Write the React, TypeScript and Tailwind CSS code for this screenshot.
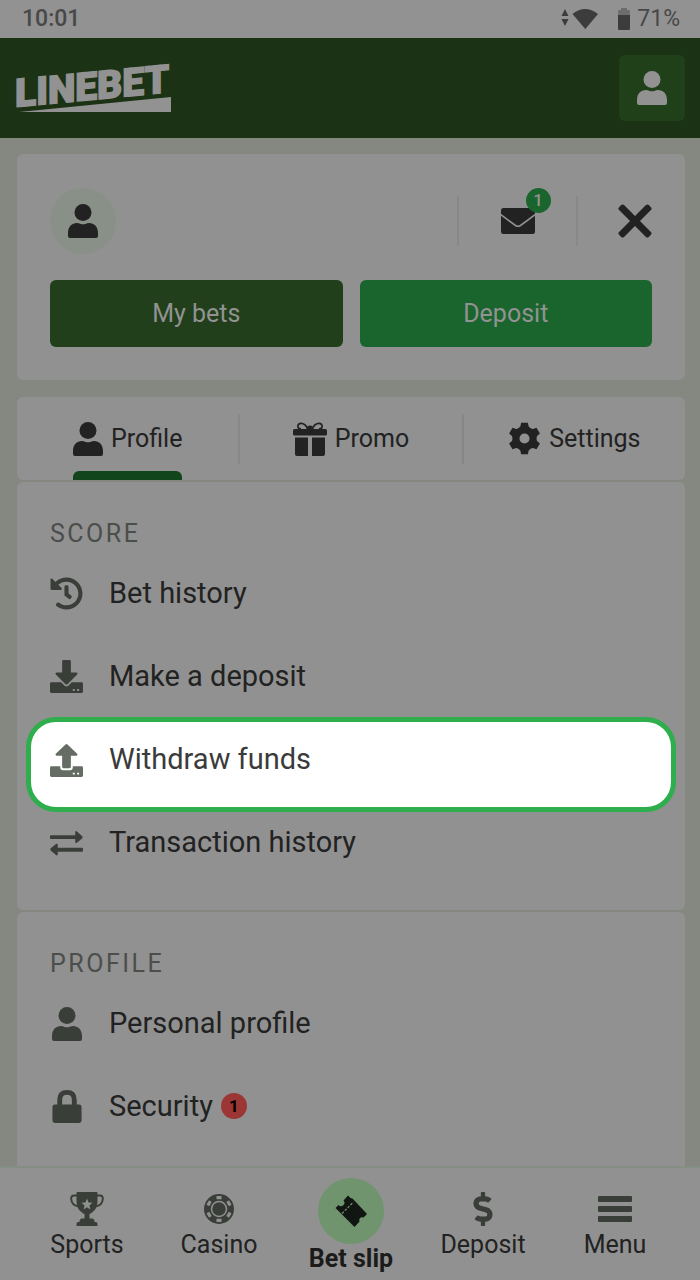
import { ReactNode } from "react";
import { FaDollarSign, FaHistory } from "react-icons/fa";

interface IconProps {
  className?: string;
}

interface MenuRowProps {
  icon: ReactNode;
  label: string;
  badge?: number;
  active?: boolean;
}

function UserIcon({ className }: IconProps) {
  return (
    <svg viewBox="0 0 30 34" fill="currentColor" className={className} aria-hidden="true">
      <circle cx="15" cy="8.5" r="8.5" />
      <path d="M0 29C0 22.500 4 19 9 19Q11 19 12 19.700Q15 21 18 19.700Q19 19 21 19C26 19 30 22.500 30 29V32Q30 34 28 34H2Q0 34 0 32Z" />
    </svg>
  );
}

function MailIcon() {
  return (
    <svg viewBox="0 0 34 26" className="h-[26px] w-[34px]" aria-hidden="true">
      <rect width="34" height="26" rx="2.500" fill="currentColor" />
      <path d="M-1 6L14.500 17.500Q17 19 19.500 17.500L35 6" fill="none" stroke="#919191" strokeWidth="1.600" />
    </svg>
  );
}

function CloseIcon() {
  return (
    <svg viewBox="0 0 34 34" className="size-[34px]" fill="currentColor" aria-hidden="true">
      <rect x="-4" y="13.500" width="42" height="7" rx="2" transform="rotate(45 17 17)" />
      <rect x="-4" y="13.500" width="42" height="7" rx="2" transform="rotate(-45 17 17)" />
    </svg>
  );
}

function GiftIcon() {
  return (
    <svg viewBox="0 0 34 34" className="size-[34px]" fill="currentColor" aria-hidden="true">
      <path d="M15 7C11 -1 4 .5 5 5Q5.500 7 8 7M19 7C23 -1 30 .5 29 5Q28.500 7 26 7" fill="none" stroke="currentColor" strokeWidth="1.800" />
      <path d="M13.500 7Q14 3.500 17 3.500T20.500 7Z" />
      <rect y="7" width="34" height="6.500" rx="1.500" />
      <path d="M2 15.500H15V34H4Q2 34 2 32ZM19 15.500H32V32Q32 34 30 34H19Z" />
    </svg>
  );
}

const teeth = [0, 60, 120, 180, 240, 300];

function GearIcon() {
  return (
    <svg viewBox="0 0 34 34" className="size-[33px]" fill="currentColor" aria-hidden="true">
      <circle cx="17" cy="17" r="8.700" fill="none" stroke="currentColor" strokeWidth="7" />
      {teeth.map((angle) => (
        <path key={angle} d="M13.500 .7H20.500L21.200 4.500L23.500 7H10.500L12.800 4.500Z" transform={`rotate(${angle} 17 17)`} />
      ))}
    </svg>
  );
}

function DepositIcon() {
  return (
    <svg viewBox="0 0 34 34" className="size-[33px]" fill="currentColor" aria-hidden="true">
      <path d="M13.500 0H20Q21.500 0 21.500 1.500V13H27Q29 13 28 15L18 25Q17 26 16 25L6 15Q5 13 7 13H12.500V1.500Q12.500 0 13.500 0Z" />
      <path
        fillRule="evenodd"
        d="M1.500 23H11.500L15 26.500Q17 28 19 26.500L22.500 23H32.500Q34 23 34 24.500V32.500Q34 34 32.500 34H1.500Q0 34 0 32.500V24.500Q0 23 1.500 23ZM23.500 30V32H25.500V30ZM28 30V32H30V30Z"
      />
    </svg>
  );
}

function WithdrawIcon() {
  return (
    <svg viewBox="0 0 34 34" className="size-[33px]" fill="currentColor" aria-hidden="true">
      <path d="M16 .5Q17 -.3 18 .5L28 10Q28.800 11.800 27 12H21.500V23.500Q21.500 25 20 25H14Q12.500 25 12.500 23.500V12H7Q5.200 11.800 6 10Z" />
      <path
        fillRule="evenodd"
        d="M1.500 23H10.500V24Q10.500 27 13.500 27H20.500Q23.500 27 23.500 24V23H32.500Q34 23 34 24.500V32.500Q34 34 32.500 34H1.500Q0 34 0 32.500V24.500Q0 23 1.500 23ZM23.500 29.500V31.500H25.500V29.500ZM28 29.500V31.500H30V29.500Z"
      />
    </svg>
  );
}

function TransferIcon() {
  return (
    <svg viewBox="0 0 34 26" className="h-[26px] w-[33px]" fill="currentColor" aria-hidden="true">
      <path d="M1 5H26V2Q26 .3 27.500 .8L33.300 6Q34 7 33.300 8L27.500 13Q26 13.500 26 12V9H1Q0 9 0 8V6Q0 5 1 5Z" />
      <path d="M33 18H8V15Q8 13.300 6.500 13.800L.7 18.500Q0 19.700 .7 20.700L6.500 25.700Q8 26.200 8 24.700V22H33Q34 22 34 21V19Q34 18 33 18Z" />
    </svg>
  );
}

function LockIcon() {
  return (
    <svg viewBox="0 0 30 34" className="h-[33px] w-[30px]" fill="currentColor" aria-hidden="true">
      <path d="M7.500 17V10Q7.500 2.500 15 2.500T22.500 10V17" fill="none" stroke="currentColor" strokeWidth="5" />
      <rect y="15" width="30" height="19" rx="2.500" />
    </svg>
  );
}

function TrophyIcon() {
  return (
    <svg viewBox="0 0 34 34" className="size-[34px]" aria-hidden="true">
      <path d="M7 3.500H4Q1 3.500 1.200 7C1.500 11 4 14 9 14.500M27 3.500H30Q33 3.500 32.800 7C32.500 11 30 14 25 14.500" fill="none" stroke="currentColor" strokeWidth="2" />
      <path
        d="M7.500 0H26.500Q27.500 0 27.500 1V9C27.500 16 24 20 19.500 22V26.500H22Q24.500 26.500 24.500 30H26Q27.500 30 27.500 32V34H6.500V32Q6.500 30 8 30H9.500Q9.500 26.500 12 26.500H14.500V22C10 20 6.500 16 6.500 9V1Q6.500 0 7.500 0Z"
        fill="currentColor"
      />
      <path d="M17 6.500L18.500 10.500L22.500 10.800L19.400 13.400L20.400 17.500L17 15.200L13.600 17.500L14.600 13.400L11.500 10.800L15.500 10.500Z" fill="#919191" />
    </svg>
  );
}

function ChipIcon() {
  return (
    <svg viewBox="0 0 34 34" className="size-[34px]" aria-hidden="true">
      <circle cx="17" cy="17" r="15" fill="currentColor" />
      <circle cx="17" cy="17" r="7.500" fill="none" stroke="#919191" strokeWidth="1.500" />
      {teeth.map((angle) => (
        <rect key={angle} x="14.500" y="4" width="5" height="3.200" rx=".5" fill="#919191" transform={`rotate(${angle} 17 17)`} />
      ))}
    </svg>
  );
}

function TicketIcon() {
  return (
    <svg viewBox="0 0 34 34" className="size-[34px]" aria-hidden="true">
      <path
        d="M14 1.500L16.500 4L18.500 4.500L33 20L29.500 23.500A3 3 0 0 0 25.500 27.500L20.500 33L1.500 14L4.500 11A3 3 0 0 0 9.500 6.500Z"
        fill="currentColor"
      />
      <path d="M8 19.500L19.500 8" stroke="#6f946e" strokeWidth="1.200" strokeDasharray="2.500 1.500" />
    </svg>
  );
}

function MenuIcon() {
  return (
    <svg viewBox="0 0 34 34" className="size-[34px]" fill="currentColor" aria-hidden="true">
      <rect y="4" width="34" height="6" rx="1" />
      <rect y="14" width="34" height="6" rx="1" />
      <rect y="24" width="34" height="6" rx="1" />
    </svg>
  );
}

function StatusBar() {
  return (
    <div className="flex h-[38px] items-center bg-[#929292] pr-5 pl-[22px] text-[23px] leading-6 text-[#484848]">
      <span className="font-medium">10:01</span>
      <div className="ml-auto flex items-center">
        <svg viewBox="0 0 60 24" className="h-6 w-[60px]" fill="#3c3c3c" aria-hidden="true">
          <path d="M.5 9L4 2L7.500 9ZM.5 12H7.500L4 19Z" />
          <path d="M11.500 7Q24 -3 37 7L24.300 22Z" />
        </svg>
        <svg viewBox="0 0 14 24" className="-ml-1 h-6 w-[14px]" aria-hidden="true">
          <path d="M4 1H10V3H12Q13 3 13 4V9H1V4Q1 3 2 3H4Z" fill="#6d6d6d" />
          <path d="M1 8H13V22Q13 23 12 23H2Q1 23 1 22Z" fill="#3c3c3c" />
        </svg>
        <span className="ml-[6px]">71%</span>
      </div>
    </div>
  );
}

function Header() {
  return (
    <header className="flex h-[100px] items-center justify-between bg-[#1c3214] pr-[15px] pl-[14px]">
      <a href="#" aria-label="Linebet">
        <svg viewBox="-2 -15 160 80" className="h-20 w-40 overflow-visible" fill="#929292" aria-hidden="true">
          <text
            x="-1"
            y="44"
            fontSize="39"
            fontWeight="900"
            fontFamily="Roboto, sans-serif"
            stroke="#929292"
            strokeWidth="1.500"
            transform="skewY(-5.500)"
          >
            LINEBET
          </text>
          <path d="M3 49L155 34V49Z" />
        </svg>
      </a>
      <button type="button" aria-label="Account" className="flex size-[66px] items-center justify-center rounded-md bg-[#20401a] text-[#929292]">
        <UserIcon className="h-[34px] w-[30px]" />
      </button>
    </header>
  );
}

function MenuRow({ icon, label, badge, active }: MenuRowProps) {
  return (
    <li
      className={
        active
          ? "relative z-10 -mx-6 -mb-3 h-[95px] rounded-[30px] border-[5px] border-[#2eae4c] bg-white px-[19px] pb-3 text-[#3a3b3a]"
          : "h-[83px] text-[#212221]"
      }
    >
      <button type="button" className="flex h-full w-full items-center gap-[26px] text-left">
        <span className={active ? "flex w-[33px] justify-center pt-[3px] text-[#656c64]" : "flex w-[33px] justify-center pt-[2px] text-[#3a3e39]"}>{icon}</span>
        <span className="flex items-center gap-2 text-[29px] leading-9">
          {label}
          {badge && (
            <span className="flex size-[26px] items-center justify-center rounded-full bg-[#9b3635] text-[17px] font-bold text-black">{badge}</span>
          )}
        </span>
      </button>
    </li>
  );
}

function Tab({ icon, label, active }: MenuRowProps) {
  return (
    <button type="button" role="tab" aria-selected={!!active} className="flex h-full flex-1 justify-center">
      <span className="grid h-full grid-rows-[9px_1fr_9px]">
        <span className="row-start-2 flex items-center gap-2">
          {icon}
          {label}
        </span>
        {active && <span className="row-start-3 rounded-t-md bg-[#13451c]" />}
      </span>
    </button>
  );
}

function NavItem({ icon, label }: MenuRowProps) {
  return (
    <a href="#" className="flex flex-1 flex-col items-center pt-6">
      <span className="text-[#3a3e39]">{icon}</span>
      <span className="mt-[3px] leading-8">{label}</span>
    </a>
  );
}

function App() {
  return (
    <div className="flex min-h-screen flex-col bg-[#858881] font-[Roboto,sans-serif] text-[25px] text-[#212221]">
      <StatusBar />
      <Header />

      <main className="flex flex-1 flex-col pt-4 pr-[15px] pl-[17px]">
        <section className="rounded-md bg-[#919191] px-[33px] pt-[34px] pb-[33px]">
          <div className="flex h-[66px] items-center">
            <div className="flex size-[66px] items-center justify-center rounded-full bg-[#899087]">
              <UserIcon className="h-[34px] w-[30px]" />
            </div>
            <div className="ml-auto flex h-[50px] items-center">
              <div className="flex h-full w-[121px] items-center justify-center border-x-2 border-[#858a84]">
                <button type="button" aria-label="Messages" className="relative">
                  <MailIcon />
                  <span className="absolute -top-5 -right-4 flex size-[25px] items-center justify-center rounded-full bg-[#1a652d] text-[17px] font-medium text-[#929292]">
                    1
                  </span>
                </button>
              </div>
              <button type="button" aria-label="Close" className="ml-10">
                <CloseIcon />
              </button>
            </div>
          </div>
          <div className="mt-[26px] grid grid-cols-2 gap-[17px] text-[#929292]">
            <button type="button" className="h-[67px] rounded-md bg-[#203f1a]">My bets</button>
            <button type="button" className="h-[67px] rounded-md bg-[#1a652d]">Deposit</button>
          </div>
        </section>

        <div role="tablist" className="mt-[17px] flex h-[83px] items-center rounded-md bg-[#919191]">
          <Tab icon={<UserIcon className="h-[34px] w-[30px]" />} label="Profile" active />
          <span className="h-[50px] w-[2px] bg-[#858a84]" />
          <Tab icon={<GiftIcon />} label="Promo" />
          <span className="h-[50px] w-[2px] bg-[#868686]" />
          <Tab icon={<GearIcon />} label="Settings" />
        </div>

        <section className="mt-[2px] rounded-md bg-[#919191] px-[33px] pt-[34px] pb-[27px]">
          <h2 className="leading-[35px] tracking-widest text-[#4b4e4a]">SCORE</h2>
          <ul>
            <MenuRow icon={<FaHistory size={33} />} label="Bet history" />
            <MenuRow icon={<DepositIcon />} label="Make a deposit" />
            <MenuRow icon={<WithdrawIcon />} label="Withdraw funds" active />
            <MenuRow icon={<TransferIcon />} label="Transaction history" />
          </ul>
        </section>

        <section className="mt-[2px] flex-1 rounded-t-md bg-[#919191] px-[33px] pt-[34px]">
          <h2 className="leading-[35px] tracking-widest text-[#4b4e4a]">PROFILE</h2>
          <ul>
            <MenuRow icon={<UserIcon className="h-[34px] w-[30px]" />} label="Personal profile" />
            <MenuRow icon={<LockIcon />} label="Security" badge={1} />
          </ul>
        </section>
      </main>

      <nav className="flex h-[114px] border-t-2 border-[#858e83] bg-[#919191] pr-[19px] pl-[21px]">
        <NavItem icon={<TrophyIcon />} label="Sports" />
        <NavItem icon={<ChipIcon />} label="Casino" />
        <a href="#" className="flex flex-1 flex-col items-center pt-[10px] font-bold text-[#1a1b1a]">
          <span className="flex size-[66px] items-center justify-center rounded-full bg-[#6f946e] text-[#121612]">
            <TicketIcon />
          </span>
          <span className="leading-[30px]">Bet slip</span>
        </a>
        <NavItem icon={<FaDollarSign size={34} />} label="Deposit" />
        <NavItem icon={<MenuIcon />} label="Menu" />
      </nav>
    </div>
  );
}

export default App;
